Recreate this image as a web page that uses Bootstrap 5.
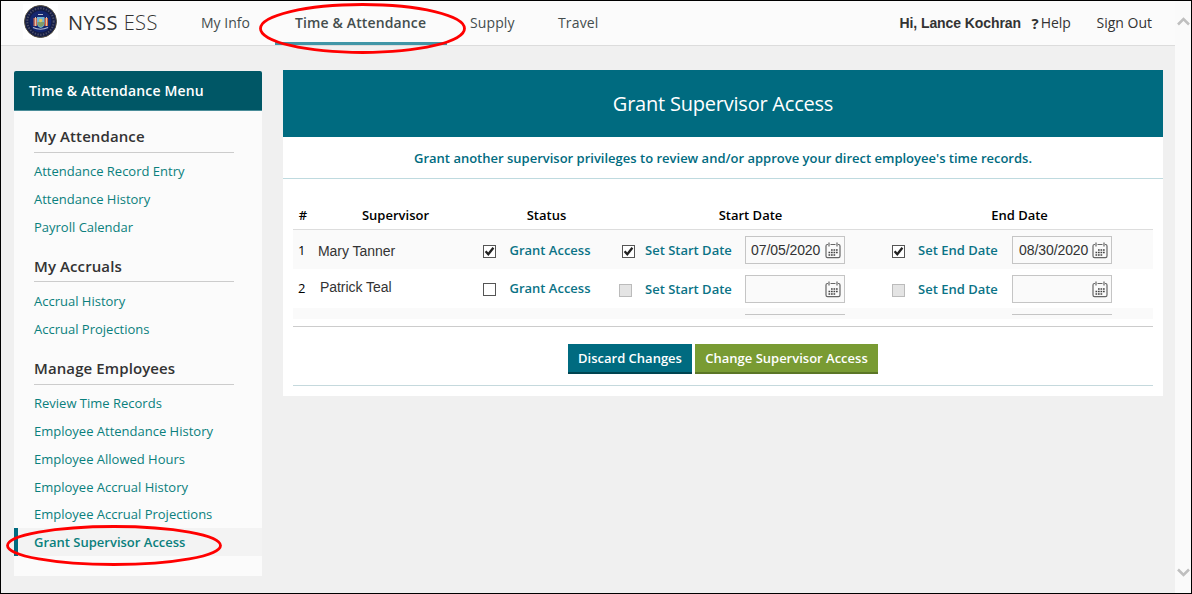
<!DOCTYPE html>
<html lang="en">
<head>
<meta charset="utf-8">
<meta name="viewport" content="width=device-width, initial-scale=1">
<title>NYSS ESS - Grant Supervisor Access</title>
<link rel="stylesheet" href="https://cdn.jsdelivr.net/npm/bootstrap@5.3.0/dist/css/bootstrap.min.css">
<style>
  body { font-family: "Open Sans", sans-serif; font-size: 13px; line-height: 18px; color: #000; background: #f0f0f0; }
  a { text-decoration: none; color: inherit; }
  .arial { font-family: "Liberation Sans", Arial, sans-serif; }
  .window { height: 594px; border: 1px solid #000; overflow: hidden; }
  .scroll-track { width: 16px; background: #fafafa; color: #bfbfbf; padding: 16px 0 16px; }
  .scroll-track svg { display: block; margin-left: 2px; }

  .topbar { height: 45px; background: #fbfbfb; border-bottom: 1px solid #dcdcdc; padding: 0 0 0 22px; color: #444d4d; font-size: 14px; }
  .seal { width: 35px; height: 35px; margin-top: 3px; background: #fff; }
  .brand { width: 132px; padding-left: 10px; padding-top: 9px; font-size: 20px; line-height: 26px; color: #333; letter-spacing: .45px; }
  .brand span { font-weight: 300; }
  .tabs { margin-left: -9px; }
  .tab { height: 44px; padding: 13px 20px 0; line-height: 18px; white-space: nowrap; }
  .tab.info { width: 94px; }
  .tab.current { font-weight: 600; border-bottom: 3px solid #4196a7; width: 172px; letter-spacing: .13px; }
  .tab.supply { width: 91px; padding-left: 23px; letter-spacing: .1px; }
  .tab.travel { letter-spacing: .15px; }
  .user-links { padding: 13px 23px 0 0; white-space: nowrap; color: #333; }
  .user-name { font-weight: 700; width: 132px; font-size: 14px; letter-spacing: -.08px; }
  .help { width: 65px; }
  .help b { font-size: 15px; margin-right: 2px; }

  .page { padding: 24px 12px 0 13px; }
  .side { width: 248px; margin-top: 1px; }
  .side-head { height: 40px; background: #005766; border-bottom: 1px solid #4a8d99; color: #fff; font-size: 14px; font-weight: 600; letter-spacing: .16px; padding: 11px 15px 0; border-radius: 2px 2px 0 0; }
  .side-body { background: #fbfbfb; padding-bottom: 20px; }
  .side-title { height: 41.55px; margin: 0 28px 5.25px 20px; padding-top: 15px; border-bottom: 1px solid #ccc; font-size: 15px; line-height: 20px; font-weight: 600; color: #333; letter-spacing: .1px; }
  .side-link { display: block; height: 27.7px; padding: 4.65px 0 0 20px; color: #0a807d; }
  .side-link.current { background: #f3f3f3; border-left: 4px solid #006b80; padding-left: 16px; font-weight: 600; }

  .main { width: 880px; margin-left: 21px; background: #fff; height: 326px; }
  .main h1 { height: 67px; margin: 0; background: #006b80; color: #fff; font-size: 20px; font-weight: 400; line-height: 67px; letter-spacing: -.22px; }
  .note { height: 42px; border-bottom: 1px solid #bfdadf; color: #006b80; font-weight: 600; padding-top: 12px; }
  .sheet { margin: 0 10px; }
  .line { display: grid; grid-template-columns: 20px 164px 138px 270px 1fr; height: 39px; }
  .line.odd { background: #fafafa; }
  .heading-line { grid-template-columns: 20px 165px 137px 271px 1fr; height: 51px; padding-top: 27px; border-bottom: 1px solid #ddd; font-weight: 600; text-align: center; }
  .num { padding: 11px 0 0 5px; }
  .line:nth-child(3) .num { padding-top: 10px; }
  .person { color: #333; font-size: 14px; padding: 12px 0 0 5px; letter-spacing: -.05px; }
  .person.raised { padding: 9px 0 0 7px; }
  .pick { display: grid; color: #0b7386; font-weight: 600; }
  .pick .word { padding-top: 11px; white-space: nowrap; }
  .status { grid-template-columns: 32.5px 1fr; }
  .status .word.up { padding-top: 10px; }
  .start { grid-template-columns: 30px 100px 100px; }
  .end { grid-template-columns: 33px 94px 100px; }
  .tick { width: 13px; height: 13px; margin: 15px 0 0 6px; border: 1px solid #555; background: #fff; color: #222; }
  .start .tick, .end .tick { margin-left: 7px; }
  .status .tick.blank { margin-top: 14px; }
  .start .tick.off { margin-left: 4px; }
  .tick svg { display: block; }
  .tick.off { background: #e4e4e4; border-color: #bbb; }
  .datebox { height: 28px; margin-top: 6px; border: 1px solid #c5c5c5; background: #fafafa; color: #333; font-size: 14px; padding: 0 3px 0 5px; font-weight: 400; letter-spacing: -.08px; }
  .end .datebox { padding-left: 6px; }
  .partial { height: 11px; overflow: hidden; }
  .cut { border-top: 1px solid #c5c5c5; margin-top: 6px; }
  .actions { margin-top: 7px; height: 60px; border-top: 1px solid #ccc; border-bottom: 1px solid #c5d9dd; padding-top: 17px; gap: 3px; }
  .act { height: 30px; border: 0; border-bottom: 2px solid #004451; border-radius: 0; background: #006b80; color: #fff; font-size: 13px; font-weight: 600; padding: 0; width: 124px; line-height: 28px; }
  .act.go { background: #799b33; border-color: #5b7626; width: 183px; }
  .ring { position: absolute; pointer-events: none; }
</style>
</head>
<body>
<svg class="d-none">
  <symbol id="calendar" viewBox="0 0 16 17">
    <path d="M3 2.500H2.500Q1 2.500 1 4V14Q1 15.700 2.500 15.700H13.500Q15 15.700 15 14V4Q15 2.500 13.500 2.500H13M5.500 2.500H10.500" fill="none" stroke="#666" stroke-width="1.200"/>
    <path d="M4 .5V4.500M12 .5V4.500" stroke="#666" stroke-width="1.200"/>
    <path d="M6 8h1.700M8.500 8h1.700M11 8h1.700M3.500 10.500h1.700M6 10.500h1.700M8.500 10.500h1.700M11 10.500h1.700M3.500 13h1.700M6 13h1.700M8.500 13h1.700" stroke="#444" stroke-width="1.700"/>
  </symbol>
  <symbol id="check" viewBox="0 0 11 11"><path d="M1.600 5.300L4.300 8.300L9.400 1.800" fill="none" stroke="currentColor" stroke-width="2.300"/></symbol>
</svg>

<div class="window d-flex position-relative">
  <div class="flex-grow-1">
    <header class="topbar d-flex">
      <svg class="seal" viewBox="0 0 35 35">
        <circle cx="17.500" cy="17.500" r="16" fill="#151d46" stroke="#514b3c" stroke-width="1"/>
        <circle cx="17.500" cy="17.500" r="13.200" fill="none" stroke="#4d5068" stroke-width="2" stroke-dasharray="1.300 1.500"/>
        <circle cx="17.500" cy="17.500" r="10.800" fill="#14266f"/>
        <path d="M10.500 14h3.500v8h-3.500z" fill="#c36a5c"/><path d="M21.500 14h3.500v8h-3.500z" fill="#d1603f"/>
        <path d="M14 13h7.500v6q0 4-3.700 5q-3.800-1-3.800-5z" fill="#72b5d6"/>
        <path d="M14.500 18h6.500v2q-1 3-3.200 3T14.500 20z" fill="#7f9b6a"/>
        <circle cx="17.700" cy="16.500" r="1.700" fill="#e1c65c"/>
        <path d="M15 10.500h5M10 23.500q7.500 3.500 15 0" fill="none" stroke="#b9bfd0" stroke-width="1.200"/>
        <path d="M12.500 13v9M23.500 13v9" stroke="#dfc3a4" stroke-width="1"/>
      </svg>
      <div class="brand text-nowrap">NYSS <span>ESS</span></div>
      <nav class="tabs d-flex flex-grow-1">
        <a class="tab info" href="#">My Info</a>
        <a class="tab current" href="#">Time &amp; Attendance</a>
        <a class="tab supply" href="#">Supply</a>
        <a class="tab travel" href="#">Travel</a>
      </nav>
      <div class="user-links d-flex">
        <span class="user-name arial">Hi, Lance Kochran</span>
        <a class="help d-flex" href="#"><b>?</b>Help</a>
        <a href="#">Sign Out</a>
      </div>
    </header>

    <div class="page d-flex align-items-start">
      <aside class="side">
        <div class="side-head">Time &amp; Attendance Menu</div>
        <nav class="side-body">
          <div class="side-title">My Attendance</div>
          <a class="side-link" href="#">Attendance Record Entry</a>
          <a class="side-link" href="#">Attendance History</a>
          <a class="side-link" href="#">Payroll Calendar</a>
          <div class="side-title">My Accruals</div>
          <a class="side-link" href="#">Accrual History</a>
          <a class="side-link" href="#">Accrual Projections</a>
          <div class="side-title">Manage Employees</div>
          <a class="side-link" href="#">Review Time Records</a>
          <a class="side-link" href="#">Employee Attendance History</a>
          <a class="side-link" href="#">Employee Allowed Hours</a>
          <a class="side-link" href="#">Employee Accrual History</a>
          <a class="side-link" href="#">Employee Accrual Projections</a>
          <a class="side-link current" href="#">Grant Supervisor Access</a>
        </nav>
      </aside>

      <main class="main">
        <h1 class="text-center">Grant Supervisor Access</h1>
        <div class="note text-center">Grant another supervisor privileges to review and/or approve your direct employee's time records.</div>
        <div class="sheet">
          <div class="line heading-line"><div>#</div><div>Supervisor</div><div>Status</div><div>Start Date</div><div>End Date</div></div>
          <div class="line odd">
            <div class="num">1</div>
            <div class="person arial">Mary Tanner</div>
            <div class="pick status"><span class="tick"><svg width="11" height="11"><use href="#check"/></svg></span><span class="word">Grant Access</span></div>
            <div class="pick start"><span class="tick"><svg width="11" height="11"><use href="#check"/></svg></span><span class="word">Set Start Date</span>
              <div class="datebox arial d-flex align-items-center justify-content-between">07/05/2020<svg width="16" height="17"><use href="#calendar"/></svg></div></div>
            <div class="pick end"><span class="tick"><svg width="11" height="11"><use href="#check"/></svg></span><span class="word">Set End Date</span>
              <div class="datebox arial d-flex align-items-center justify-content-between">08/30/2020<svg width="16" height="17"><use href="#calendar"/></svg></div></div>
          </div>
          <div class="line">
            <div class="num">2</div>
            <div class="person raised arial">Patrick Teal</div>
            <div class="pick status"><span class="tick blank"></span><span class="word up">Grant Access</span></div>
            <div class="pick start"><span class="tick off"></span><span class="word">Set Start Date</span>
              <div class="datebox d-flex align-items-center justify-content-end"><svg width="16" height="17"><use href="#calendar"/></svg></div></div>
            <div class="pick end"><span class="tick off"></span><span class="word">Set End Date</span>
              <div class="datebox d-flex align-items-center justify-content-end"><svg width="16" height="17"><use href="#calendar"/></svg></div></div>
          </div>
          <div class="line odd partial">
            <div></div><div></div><div></div>
            <div class="pick start"><span></span><span></span><span class="cut"></span></div>
            <div class="pick end"><span></span><span></span><span class="cut"></span></div>
          </div>
          <div class="actions d-flex justify-content-center">
            <button class="btn act" type="button">Discard Changes</button>
            <button class="btn act go" type="button">Change Supervisor Access</button>
          </div>
        </div>
      </main>
    </div>
  </div>
  <div class="scroll-track d-flex flex-column justify-content-between">
    <svg width="13" height="9" viewBox="0 0 13 9"><path d="M1 7.500L6.500 2L12 7.500" fill="none" stroke="currentColor" stroke-width="2.500"/></svg>
    <svg width="13" height="9" viewBox="0 0 13 9"><path d="M1 1.500L6.500 7L12 1.500" fill="none" stroke="currentColor" stroke-width="2.500"/></svg>
  </div>
  <svg class="ring" style="left:258px;top:1px" width="208" height="54"><ellipse cx="103.500" cy="26.500" rx="102" ry="24" fill="none" stroke="#f00" stroke-width="2.800"/></svg>
  <svg class="ring" style="left:4px;top:523px" width="220" height="44"><ellipse cx="109" cy="21.500" rx="106.500" ry="19" fill="none" stroke="#f00" stroke-width="2.800"/></svg>
</div>
<script src="https://cdn.jsdelivr.net/npm/bootstrap@5.3.0/dist/js/bootstrap.bundle.min.js"></script>
</body>
</html>
